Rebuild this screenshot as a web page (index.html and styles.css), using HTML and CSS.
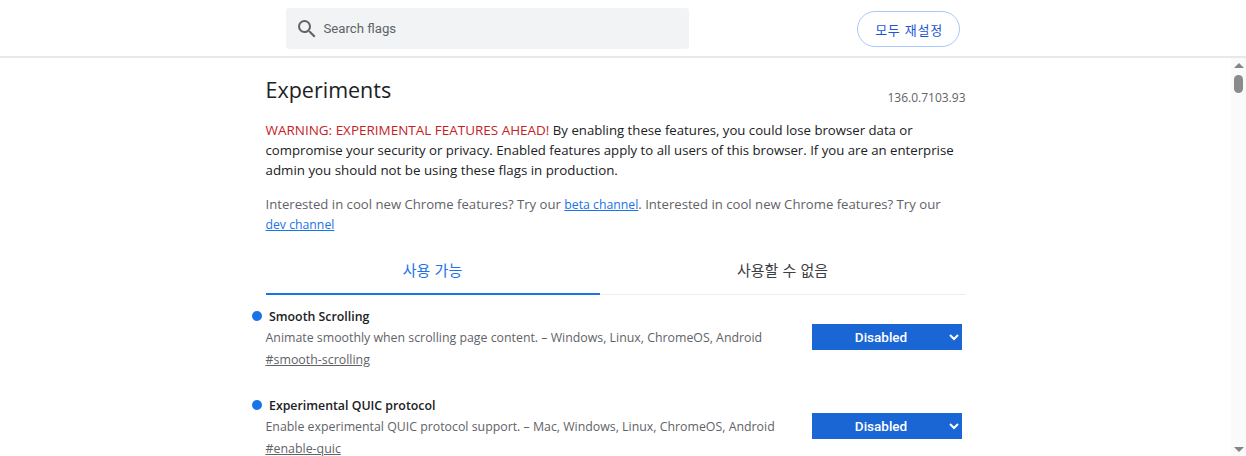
FILE: index.html
```html
<!DOCTYPE html>
<html lang="ko">
<head>
<meta charset="utf-8">
<title>Experiments</title>
<link rel="stylesheet" href="styles.css">
</head>
<body>
<header class="topbar">
  <div class="topbar-inner">
    <div class="search">
      <svg class="search-icon" viewBox="0 0 24 24" width="24" height="24"><path fill="#5f6368" d="M15.5 14h-.79l-.28-.27A6.47 6.47 0 0 0 16 9.5 6.5 6.5 0 1 0 9.5 16c1.61 0 3.09-.59 4.23-1.57l.27.28v.79l5 4.99L20.49 19l-4.99-5zm-6 0C7.01 14 5 11.99 5 9.5S7.01 5 9.5 5 14 7.01 14 9.5 11.99 14 9.5 14z"/></svg>
      <span class="search-text">Search flags</span>
    </div>
    <button class="reset">모두 재설정</button>
  </div>
</header>
<div class="below">
  <main class="page">
    <div class="content">
      <div class="title-row">
        <h1>Experiments</h1>
        <span class="version">136.0.7103.93</span>
      </div>
      <p class="warning"><span class="warn">WARNING: EXPERIMENTAL FEATURES AHEAD!</span> By enabling these features, you could lose browser data or compromise your security or privacy. Enabled features apply to all users of this browser. If you are an enterprise <span class="warning-end">admin you should not be using these flags in production.</span></p>
      <p class="channel">Interested in cool new Chrome features? Try our <a href="#">beta channel</a>. Interested in cool new Chrome features? Try our <a href="#">dev channel</a></p>
      <div class="tabs">
        <div class="tab active">사용 가능</div>
        <div class="tab">사용할 수 없음</div>
      </div>
      <section class="flag">
        <div class="flag-text">
          <h2>Smooth Scrolling</h2>
          <p>Animate smoothly when scrolling page content. – Windows, Linux, ChromeOS, Android</p>
          <a class="perma" href="#">#smooth-scrolling</a>
        </div>
        <div class="select"><span>Disabled</span><svg class="chev" viewBox="0 0 10 7" width="10" height="7"><path d="M1 1l4 4 4-4" fill="none" stroke="#fff" stroke-width="2"/></svg></div>
      </section>
      <section class="flag">
        <div class="flag-text">
          <h2>Experimental QUIC protocol</h2>
          <p>Enable experimental QUIC protocol support. – Mac, Windows, Linux, ChromeOS, Android</p>
          <a class="perma" href="#">#enable-quic</a>
        </div>
        <div class="select"><span>Disabled</span><svg class="chev" viewBox="0 0 10 7" width="10" height="7"><path d="M1 1l4 4 4-4" fill="none" stroke="#fff" stroke-width="2"/></svg></div>
      </section>
    </div>
  </main>
  <aside class="scrollbar">
    <div class="arrow-up"></div>
    <div class="thumb"></div>
    <div class="arrow-down"></div>
  </aside>
</div>
</body>
</html>
```
FILE: styles.css
```css
* { box-sizing: border-box; }
html, body { margin: 0; height: 100%; overflow: hidden; }
body {
  display: flex;
  flex-direction: column;
  background: #fff;
  color: #202124;
  font-family: "Open Sans", "Noto Sans", "Noto Sans CJK KR", sans-serif;
  font-size: 13px;
}
.topbar {
  height: 58px;
  flex: none;
  border-bottom: 2px solid #e8e8e8;
  padding-right: 15px;
}
.topbar-inner {
  width: 700px;
  margin: 0 auto;
  padding: 8px 6px 0 20px;
  display: flex;
  justify-content: space-between;
  align-items: flex-start;
}
.search {
  width: 403px;
  height: 41px;
  background: #f1f3f4;
  border-radius: 3px;
  display: flex;
  align-items: center;
  padding-left: 9px;
  gap: 5px;
}
.search-icon { flex: none; }
.search-text { font: 13.2px Roboto, sans-serif; color: #5f6368; }
.reset {
  width: 103px;
  height: 36px;
  margin-top: 3px;
  border: 1px solid #a8c7fa;
  border-radius: 18px;
  background: #fff;
  color: #1a57d0;
  font: 13px "Noto Sans CJK KR", sans-serif;
  letter-spacing: .7px;
  padding: 0 0 0 2px;
}
.below { flex: 1; display: flex; min-height: 0; }
.page { flex: 1; min-width: 0; overflow: hidden; }
.content { width: 700px; margin: 0 auto; }
.title-row {
  display: flex;
  justify-content: space-between;
  align-items: flex-start;
  padding-top: 17px;
}
h1 { margin: 0; font-size: 21.5px; font-weight: 400; line-height: 30px; color: #202124; }
.version { font-size: 12px; color: #5f6368; margin-top: 15px; line-height: 16px; }
.warning { margin: 14px 0 0; font-size: 13.2px; line-height: 20px; color: #202124; }
.warn { color: #c5221f; font-size: 13.47px; }
.warning-end { font-size: 13.33px; }
.channel { margin: 14px 0 0; font-size: 13.15px; line-height: 20px; color: #5f6368; }
.channel a { color: #1a73e8; font-size: 12.25px; line-height: 1; white-space: nowrap; }
.tabs { display: flex; margin-top: 16px; border-bottom: 1px solid #eceef0; height: 45px; }
.tab {
  font: 15px "Noto Sans CJK KR", sans-serif;
  line-height: 40px;
  text-align: center;
  color: #3c4043;
}
.tab:first-child { width: 334px; }
.tab:last-child { flex: 1; }
.tab.active { color: #1a73e8; border-bottom: 2px solid #1a73e8; height: 45px; }
.flag {
  display: flex;
  justify-content: space-between;
  align-items: flex-start;
  height: 89px;
  position: relative;
}
.flag:first-of-type { margin-top: 12px; }
.flag h2 { margin: 0; font-size: 12.35px; font-weight: 600; line-height: 20px; color: #202124; padding-left: 3.5px; }
.flag h2::before {
  content: "";
  position: absolute;
  left: -14px;
  top: 4px;
  width: 10px;
  height: 10px;
  border-radius: 50%;
  background: #1a73e8;
}
.flag p { margin: 1px 0 0; font-size: 12.35px; line-height: 20px; color: #5f6368; }
.perma { display: inline-block; margin-top: 2px; font-size: 12.4px; line-height: 20px; color: #5f6368; }
.select {
  width: 150px;
  height: 26px;
  margin: 17px 4px 0 0;
  background: #1a66d4;
  color: #fff;
  font: 500 13.5px Roboto, sans-serif;
  display: flex;
  align-items: center;
  justify-content: center;
  padding-right: 11px;
  position: relative;
}
.chev { position: absolute; top: 10px; right: 3px; }
.scrollbar {
  width: 15px;
  flex: none;
  background: #fafafa;
  display: flex;
  flex-direction: column;
  align-items: center;
  padding: 5px 0 4px;
}
.arrow-up { width: 0; height: 0; border-left: 5px solid transparent; border-right: 5px solid transparent; border-bottom: 5px solid #848484; }
.thumb { width: 9px; height: 18px; border-radius: 4.5px; background: #8a8a8a; margin-top: 7px; }
.arrow-down { width: 0; height: 0; border-left: 5px solid transparent; border-right: 5px solid transparent; border-top: 5px solid #848484; margin-top: auto; }
```
